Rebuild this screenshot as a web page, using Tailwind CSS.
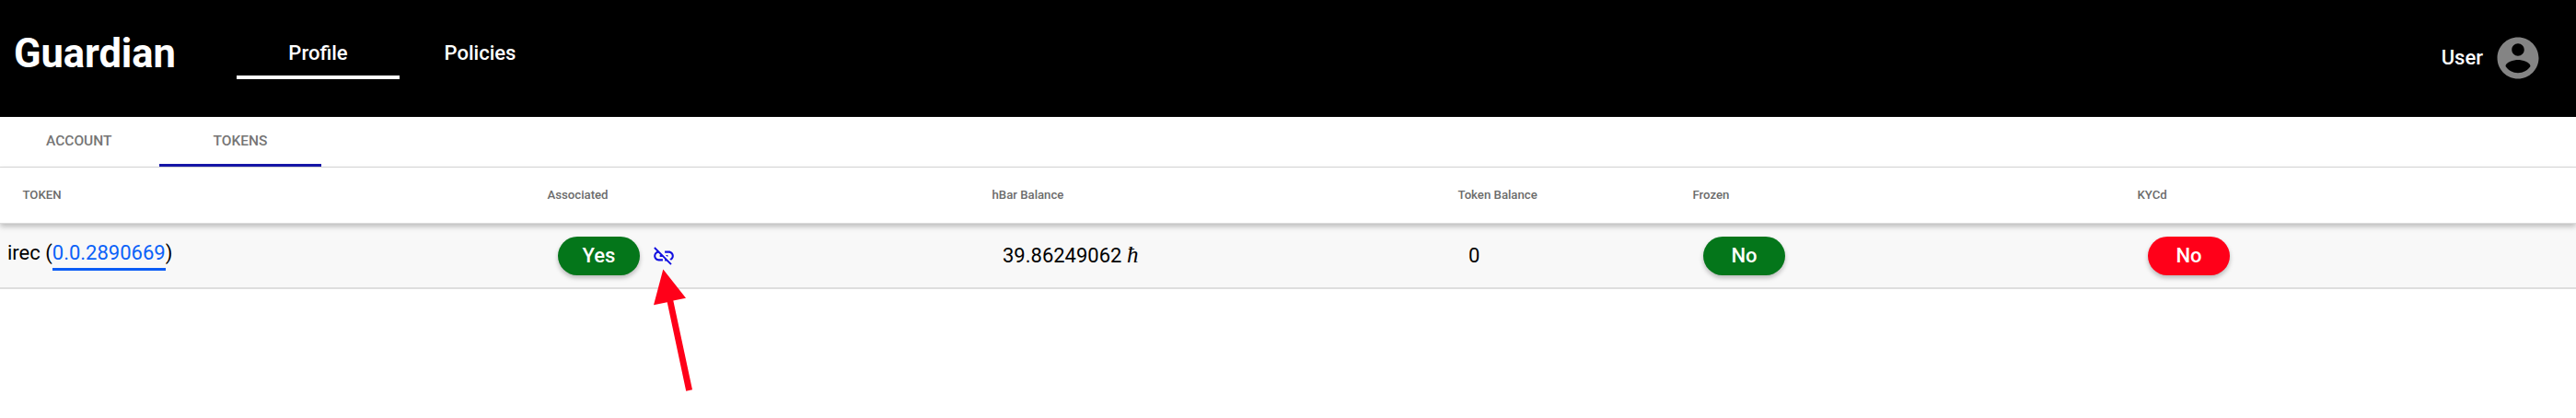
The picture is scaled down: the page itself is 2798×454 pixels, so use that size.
<!DOCTYPE html>
<html lang="en">
<head>
<meta charset="utf-8">
<title>Guardian</title>
<script src="https://cdn.jsdelivr.net/npm/@tailwindcss/browser@4"></script>
</head>
<body class="relative h-[454px] w-[2798px] overflow-hidden bg-white font-['Roboto',sans-serif] text-black">
<header class="flex h-[127px] items-start bg-black text-white">
  <h1 class="w-[257px] pt-[32px] pl-[15px] text-[43.5px] leading-[54px] font-bold tracking-[-0.1px]">Guardian</h1>
  <nav class="flex pt-[32px] text-[22px] font-medium">
    <a class="h-[54px] w-[177px] border-b-4 border-white text-center leading-[52px]">Profile</a>
    <a class="h-[54px] w-[175px] text-center leading-[52px]">Policies</a>
  </nav>
  <div class="ml-auto flex items-center pt-[36px] pr-[36px]">
    <span class="mr-[11px] text-[22px] leading-[54px] font-medium">User</span>
    <svg class="size-[54px] fill-[#848484]" viewBox="0 0 24 24"><path d="M12 2C6.48 2 2 6.48 2 12s4.48 10 10 10 10-4.48 10-10S17.52 2 12 2zm0 3c1.66 0 3 1.34 3 3s-1.34 3-3 3-3-1.34-3-3 1.34-3 3-3zm0 14.2c-2.5 0-4.71-1.28-6-3.22.03-1.99 4-3.08 6-3.08 1.99 0 5.97 1.09 6 3.08-1.29 1.94-3.5 3.22-6 3.22z"/></svg>
  </div>
</header>
<div class="flex h-[55px] border-b border-[#dadada] text-[15.5px] font-medium text-[#757575]">
  <div class="w-[173px] pl-[50px] leading-[53px]">ACCOUNT</div>
  <div class="h-[54px] w-[176px] border-b-3 border-[#1616a8] text-center leading-[53px]">TOKENS</div>
</div>
<main>
  <div class="relative grid h-[61px] grid-cols-[570px_483px_506px_255px_483px_1fr] items-center border-b border-[#dcdcdc] bg-white pb-px pl-[24.5px] text-[13.2px] font-medium text-[#6b6b6b] shadow-[0_3px_6px_rgba(0,0,0,0.25)]">
    <div>TOKEN</div><div>Associated</div><div>hBar Balance</div><div>Token Balance</div><div>Frozen</div><div>KYCd</div>
  </div>
  <div class="grid h-[71px] grid-cols-[598px_483px_506px_255px_483px_1fr] items-center border-b-2 border-[#dedede] bg-[#f8f8f8] pt-px pl-[8px] text-[22px]">
    <div class="mb-[3px] flex h-[35px] leading-[32px]">irec (<a class="h-[35px] border-b-3 border-[#0b5cf5] text-[#0b62f8]">0.0.2890669</a>)</div>
    <div class="flex items-center">
      <span class="h-[42px] w-[89px] rounded-full bg-[#04761a] text-center leading-[41px] font-medium text-white shadow-[0_3px_5px_rgba(0,0,0,0.25)]">Yes</span>
      <svg class="ml-[13px] size-[26px] fill-[#1210e0]" viewBox="0 0 24 24"><path d="M17 7h-4v1.9h4c1.71 0 3.1 1.39 3.1 3.1 0 1.43-.98 2.63-2.31 2.98l1.46 1.46C20.88 15.61 22 13.95 22 12c0-2.76-2.24-5-5-5zm-1 4h-2.19l2 2H16v-2zM2 4.27l3.11 3.11C3.29 8.12 2 9.91 2 12c0 2.76 2.24 5 5 5h4v-1.9H7c-1.71 0-3.1-1.39-3.1-3.1 0-1.59 1.21-2.9 2.76-3.07L8.73 11H8v2h2.73L13 15.27V17h1.73l4.01 4L20 19.74 3.27 3 2 4.27z"/></svg>
    </div>
    <div class="h-[42px] leading-[41px]">39.86249062 <span class="font-['Liberation_Serif',serif] text-[25px] leading-none italic">ħ</span></div>
    <div class="h-[42px] leading-[41px]">0</div>
    <div><span class="block h-[42px] w-[89px] rounded-full bg-[#04761a] text-center leading-[41px] font-medium text-white shadow-[0_3px_5px_rgba(0,0,0,0.25)]">No</span></div>
    <div><span class="block h-[42px] w-[89px] rounded-full bg-[#ff0019] text-center leading-[41px] font-medium text-white shadow-[0_3px_5px_rgba(0,0,0,0.25)]">No</span></div>
  </div>
</main>
<svg class="absolute top-[290px] left-[700px] h-[140px] w-[60px] fill-[#ff0019]" viewBox="700 290 60 140"><path d="M720.3 292.5L745 323.7L731.3 326.5L752 423.3L745.2 424.8L724.7 328.2L710 331.2Z"/></svg>
</body>
</html>
